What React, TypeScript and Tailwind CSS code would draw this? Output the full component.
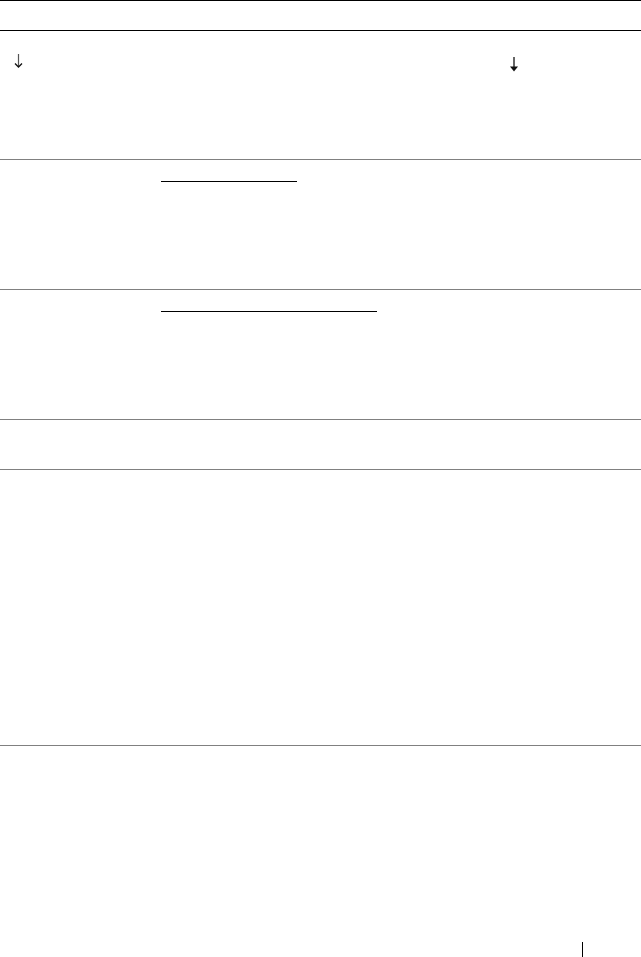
export default function App() {
  return (
    <div className="w-[641px] h-[957px] bg-white font-['Liberation_Serif',serif] flex flex-col overflow-hidden">
      <div className="h-[31px] border-t border-b border-black shrink-0" />
      <div className="h-[129px] border-b border-[#808080] grid grid-cols-[161px_348px_1fr] shrink-0">
        <div className="pt-[23px] pl-[14px]">
          <svg width="9" height="14" viewBox="0 0 9 14">
            <path d="M4.5 0v12.5" stroke="#555" strokeWidth="1.2" fill="none" />
            <path d="M1 9.5l3.5 3.5 3.5-3.5" stroke="#111" strokeWidth="1.3" fill="none" />
          </svg>
        </div>
        <div />
        <div className="pt-[26px]">
          <svg width="10" height="15" viewBox="0 0 10 15">
            <path d="M5 0v11" stroke="#666" strokeWidth="2" fill="none" />
            <path d="M1 9.5h8l-4 5z" fill="#111" />
          </svg>
        </div>
      </div>
      <div className="h-[130px] border-b border-[#808080] grid grid-cols-[161px_1fr] shrink-0">
        <div />
        <div className="pt-[21px]">
          <div className="w-[136px] h-px bg-black" />
        </div>
      </div>
      <div className="h-[130px] border-b border-[#808080] grid grid-cols-[161px_1fr] shrink-0">
        <div />
        <div className="pt-[21px]">
          <div className="w-[216px] h-px bg-black" />
        </div>
      </div>
      <div className="h-[50px] border-b border-[#808080] shrink-0" />
      <div className="h-[276px] border-b border-[#808080] shrink-0" />
      <div className="flex-1 flex justify-end items-end pr-[58px]">
        <div className="w-px h-[15px] bg-black" />
      </div>
    </div>
  );
}
